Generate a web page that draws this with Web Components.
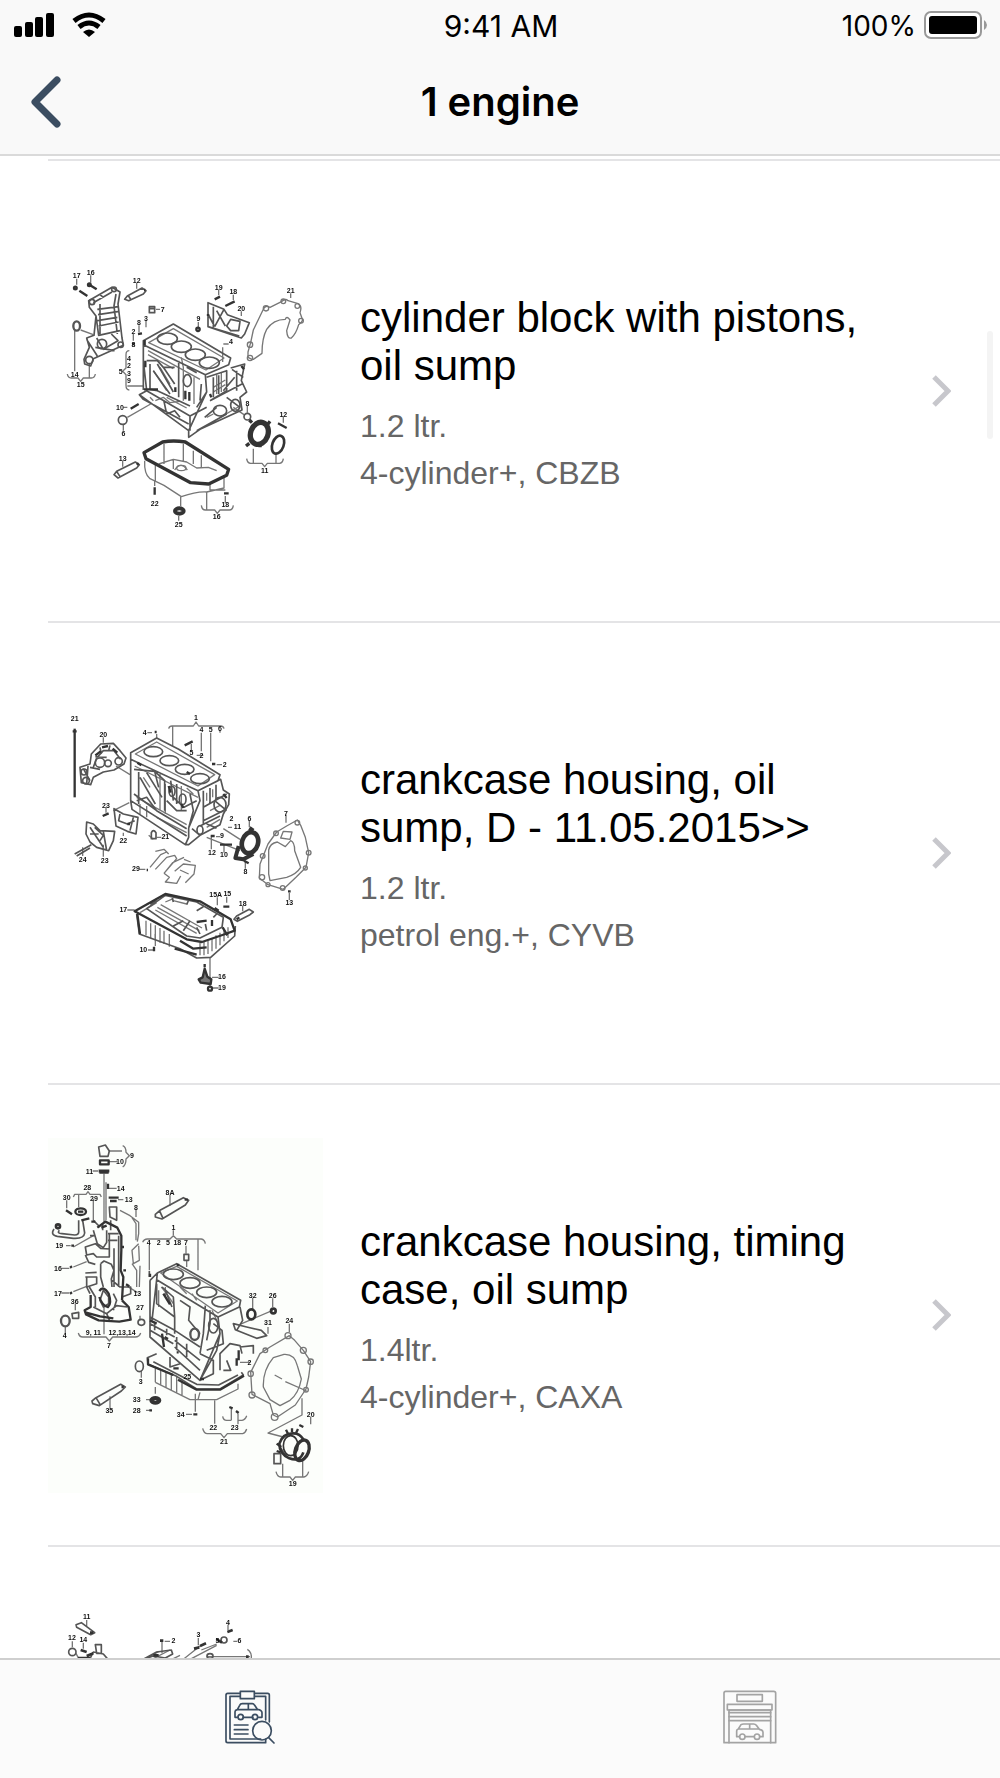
<!DOCTYPE html>
<html lang="en">
<head>
<meta charset="utf-8">
<meta name="viewport" content="width=device-width, initial-scale=1">
<title>1 engine</title>
<style>
  body{
    margin:0;
    background:#fff;
    color:#000;
    font-family:"Liberation Sans", Arial, sans-serif;
  }
</style>
</head>
<body>

<parts-app>
  <status-bar slot="top" time="9:41 AM" battery="100%"></status-bar>
  <nav-header slot="top">1 engine</nav-header>

  <part-row href="#cbzb">
    <part-diagram slot="thumb" name="block"></part-diagram>
    cylinder block with pistons, oil sump
    <span slot="size">1.2 ltr.</span>
    <span slot="model">4-cylinder+, CBZB</span>
  </part-row>
  <part-row href="#cyvb">
    <part-diagram slot="thumb" name="crankcase"></part-diagram>
    crankcase housing, oil sump, D - 11.05.2015&gt;&gt;
    <span slot="size">1.2 ltr.</span>
    <span slot="model">petrol eng.+, CYVB</span>
  </part-row>
  <part-row href="#caxa">
    <part-diagram slot="thumb" name="timing"></part-diagram>
    crankcase housing, timing case, oil sump
    <span slot="size">1.4ltr.</span>
    <span slot="model">4-cylinder+, CAXA</span>
  </part-row>
  <part-row href="#next">
    <part-diagram slot="thumb" name="next"></part-diagram>
  </part-row>

  <tab-bar slot="bottom"></tab-bar>
</parts-app>

<script>
const appTemplate = document.createElement('template');

appTemplate.innerHTML = `
 <style>
  :host{
    display:flex;
    flex-direction:column;
    height:100vh;
    overflow:hidden;
  }
  header{
    background:#f9f9f9;
    border-bottom:2px solid #dadada;
  }
  main{
    position:relative;
    flex:1;
    min-height:0;
    overflow:hidden;
    padding-top:3px;
  }
  .scroll{
    position:absolute;
    top:175px;
    right:7px;
    width:6px;
    height:108px;
    border-radius:3px;
    background:#f4f4f4;
  }
 </style>
 <header><slot name="top"></slot></header>
 <main>
   <slot></slot>
   <div class="scroll"></div>
 </main>
 <slot name="bottom"></slot>
`;

class PartsApp extends HTMLElement{
  constructor(){
    super();
    this.attachShadow({mode: 'open'})
    this.shadowRoot.appendChild(appTemplate.content.cloneNode(true))
  }
}

const statusTemplate = document.createElement('template');

statusTemplate.innerHTML = `
 <style>
  :host{
    display:grid;
    grid-template-columns:1fr auto 1fr;
    align-items:center;
    height:50px;
    padding:0 12px 0 14px;
    font-family:Inter, "Liberation Sans", sans-serif;
    font-size:28px;
    line-height:32px;
  }
  .signal, .power{
    display:flex;
    align-items:center;
  }
  .signal{
    gap:18px;
  }
  .power{
    justify-content:flex-end;
    gap:8px;
  }
  .time{
    font-size:30px;
  }
  .time, .level{
    padding-top:2px;
  }
  svg{
    display:block;
  }
 </style>
 <div class="signal">
   <svg width="40" height="26" viewBox="0 0 40 26">
     <rect x="0" y="14" width="8" height="11" rx="2"/>
     <rect x="11" y="10" width="8" height="15" rx="2"/>
     <rect x="21" y="5" width="8" height="20" rx="2"/>
     <rect x="32" y="1" width="8" height="24" rx="2"/>
   </svg>
   <svg width="34" height="26" viewBox="0 0 34 26" fill="none" stroke="#000" stroke-width="5">
     <path d="M2 9Q17 -3 32 9"/>
     <path d="M7 15Q17 7 27 15"/>
     <path d="M11 20Q17 15 23 20L17 25Z" fill="#000" stroke="none"/>
   </svg>
 </div>
 <div class="time"></div>
 <div class="power">
   <span class="level"></span>
   <svg width="64" height="28" viewBox="0 0 64 28">
     <rect x="1" y="1" width="56" height="26" rx="6" fill="#fff" stroke="#999" stroke-width="2"/>
     <rect x="5" y="5" width="48" height="18" rx="3"/>
     <path d="M60 9Q63 11 63 14T60 19Z" fill="#999"/>
   </svg>
 </div>
`;

class StatusBar extends HTMLElement{
  constructor(){
    super();
    this.attachShadow({mode: 'open'})
    this.shadowRoot.appendChild(statusTemplate.content.cloneNode(true))
    this.shadowRoot.querySelector('.time').textContent = this.getAttribute('time')
    this.shadowRoot.querySelector('.level').textContent = this.getAttribute('battery')
  }
}

const navTemplate = document.createElement('template');

navTemplate.innerHTML = `
 <style>
  :host{
    display:grid;
    grid-template-columns:1fr auto 1fr;
    align-items:center;
    height:104px;
  }
  h1{
    margin:0;
    font-family:Inter, "Liberation Sans", sans-serif;
    font-size:40px;
    line-height:48px;
    font-weight:600;
  }
  button{
    justify-self:start;
    margin:0;
    padding:12px 30px;
    border:0;
    background:none;
  }
  svg{
    display:block;
  }
 </style>
 <button type="button" aria-label="Back">
   <svg width="32" height="52" viewBox="0 0 32 52" fill="none" stroke="#3b4d61" stroke-width="7" stroke-linecap="round" stroke-linejoin="round">
     <path d="M27 4L5 26L27 48"/>
   </svg>
 </button>
 <h1><slot></slot></h1>
`;

class NavHeader extends HTMLElement{
  constructor(){
    super();
    this.attachShadow({mode: 'open'})
    this.shadowRoot.appendChild(navTemplate.content.cloneNode(true))
  }
}

const rowTemplate = document.createElement('template');

rowTemplate.innerHTML = `
 <style>
  :host{
    display:block;
    margin-left:48px;
    border-top:2px solid #e4e4e6;
  }
  a{
    display:flex;
    align-items:center;
    height:460px;
    padding-right:49px;
    color:inherit;
    text-decoration:none;
  }
  .text{
    flex:1;
    padding:8px 52px 0 37px;
  }
  h2{
    margin:0 0 13px;
    font-size:42px;
    line-height:48px;
    font-weight:400;
  }
  p{
    margin:0;
    color:#666;
    font-size:32px;
    line-height:47px;
  }
  svg{
    display:block;
    flex:none;
  }
 </style>
 <a>
   <slot name="thumb"></slot>
   <div class="text">
     <h2><slot></slot></h2>
     <p><slot name="size"></slot></p>
     <p><slot name="model"></slot></p>
   </div>
   <svg width="20" height="32" viewBox="0 0 20 32" fill="none" stroke="#c7c7cc" stroke-width="5">
     <path d="M3 2L17 16L3 30"/>
   </svg>
 </a>
`;

class PartRow extends HTMLElement{
  constructor(){
    super();
    this.attachShadow({mode: 'open'})
    this.shadowRoot.appendChild(rowTemplate.content.cloneNode(true))
    this.shadowRoot.querySelector('a').setAttribute('href', this.getAttribute('href'))
  }
}

// exploded views, drawn at three units to the pixel
// labels are [text, x, y] with y on the baseline
const diagrams = {
  block: {
    viewBox: '24 -110 825 1065',
    shapes: `
      <g class="fine">
        <path d="M110 84V102M152 74V96M290 97V114M348 176H360M104 240V362M82 370Q84 382 94 382H114L122 392L130 382H154Q164 382 166 370M148 340V382M122 238L160 252M536 117V134M580 132V148M604 182V196M752 128V142M475 214V230M297 224V244M318 210V230M280 250V270M268 300Q258 300 258 312V352L248 362L258 372V404Q258 418 268 418M262 406H310M250 470H262M262 500L332 460M250 522V540M622 466V486M580 470L612 492M550 280H566M548 290V334"/>
        <path d="M640 594V636M708 606V636M620 624Q622 638 632 638H666L674 648L682 638H718Q728 638 730 624M730 498V516M248 630V648M484 764Q486 778 496 778H524L532 788L540 778H568Q578 778 580 764M500 724V776M556 736V756M422 738V766M344 690V706M416 796V810"/>
        <path d="M636 326L624 320V304L632 276L640 238L670 176Q676 162 690 170L726 152Q736 142 744 150L772 158Q788 164 780 186L788 208Q784 218 776 222Q768 250 754 262Q742 266 740 240L750 208Q740 194 736 206Q700 206 680 236Q666 262 666 308L640 326Z"/>
        <circle cx="678" cy="173" r="8"/><circle cx="730" cy="152" r="7"/><circle cx="772" cy="166" r="7"/><circle cx="783" cy="210" r="7"/><circle cx="630" cy="282" r="8"/><circle cx="630" cy="322" r="8"/>
        <path d="M372 580V640M430 580V630M460 600V640M484 614V650M346 640V690M314 630Q312 670 330 684L372 704L424 738Q470 722 500 724L552 712V680M356 640L400 626L440 634L470 652L505 650L530 660M400 626V655M404 658Q422 630 442 658M510 700V718H556"/>
        <ellipse cx="424" cy="652" rx="14" ry="8"/>
        <path d="M326 276L400 234L552 322L498 358Z"/>
        <path d="M324 300L480 386M324 312L400 354M430 350V450M462 380V460M424 320L430 350M380 440L440 472M360 350L390 400M340 360L380 420M346 450L370 440L390 456L420 452M330 440L340 450M520 410L556 388M520 424L556 402M530 372V430M544 366V424M500 500L520 490M540 500L600 466"/>
      </g>
      <g>
        <path d="M146 150L216 110L240 124L234 160L246 262L250 284L160 324L152 346L134 340L132 326L148 290L140 262L162 254L168 196L148 170ZM160 156L216 124M168 196L176 254L240 240M172 176L236 168M174 192L238 182M172 210L232 200M176 226L236 214M190 140L180 132M170 262L190 296L234 270L214 250M140 266L172 316M166 290L224 300M228 130L222 166L232 250M180 160V250"/>
        <circle cx="186" cy="280" r="14"/><circle cx="148" cy="328" r="11"/><circle cx="222" cy="116" r="7"/><circle cx="156" cy="154" r="8"/><circle cx="242" cy="282" r="8"/>
        <ellipse cx="110" cy="226" rx="10" ry="14" stroke-width="7"/>
        <path d="M254 146L262 136L306 112L318 120L310 130L266 150ZM264 134L272 146"/>
        <path d="M222 672L230 662L286 634L298 642L290 652L234 682ZM230 662L240 678"/>
        <path d="M328 168H344V186H328ZM330 174H342"/>
        <path d="M504 156L552 176L562 192L628 216L614 250L604 262L504 228ZM520 168V230M504 190L524 228M552 176L524 228M560 226L572 206L600 212L596 240L572 240ZM530 180L556 226M504 228L598 256"/>
        <path d="M310 270L400 220L572 322L566 342L496 372L310 282ZM310 282V418M310 330L320 420L298 432L446 540V560L480 536L606 478L600 440L620 424L604 390L614 340L572 352M496 372L500 424L446 540M416 330V440M320 330H352L370 350L404 350M330 340V416L352 420L450 466M352 340L400 424M340 360L390 430M370 350L404 400M320 420L450 496L500 470M298 432L310 446L446 520M372 452L380 490L404 480L420 500M450 496V540M500 380L560 360V420L510 450M520 380V440M536 374V430M550 420L584 380M510 450L606 400M560 440L600 470M494 500L530 470M470 540L560 490M590 360V420M576 356L610 380M500 424L470 470M484 400L480 450M440 350L470 366"/>
        <ellipse cx="382" cy="264" rx="30" ry="17"/><ellipse cx="424" cy="288" rx="30" ry="17"/><ellipse cx="466" cy="312" rx="30" ry="17"/><ellipse cx="508" cy="336" rx="30" ry="17"/>
        <ellipse cx="442" cy="390" rx="12" ry="18"/><ellipse cx="540" cy="480" rx="20" ry="16"/><ellipse cx="586" cy="464" rx="14" ry="18"/>
        <circle cx="248" cy="508" r="13"/><circle cx="622" cy="498" r="10"/>
      </g>
      <g class="heavy">
        <path d="M118 120L142 136M148 102L170 116M312 118H316M524 146L540 138M556 166L584 152M294 250L306 248M280 276V284M272 474L296 460M714 518L740 532M344 710V732M552 728H566M290 642L296 638M436 420V446M448 424V450M510 430L514 440M604 346L612 356M312 416H354M316 330V350M314 268V284M504 190V196M406 410V424"/>
        <circle cx="106" cy="112" r="4"/><circle cx="148" cy="102" r="4"/><circle cx="474" cy="236" r="5"/>
        <path d="M312 606L368 574Q400 568 436 574L566 656L560 674L506 700L452 696L318 624Z" stroke-width="10"/>
        <ellipse cx="658" cy="548" rx="26" ry="34" stroke-width="16" transform="rotate(20 658 548)"/>
        <path d="M636 516L628 508M690 512L684 520M618 586L628 578M660 590V580" stroke-width="10"/>
        <ellipse cx="714" cy="582" rx="17" ry="28" stroke-width="8" transform="rotate(20 714 582)"/>
        <ellipse cx="418" cy="781" rx="13" ry="8" stroke-width="12"/>
      </g>`,
    labels: [['17',110,82],['16',152,72],['12',290,96],['7',368,183],['19',536,117],['18',580,131],['20',604,180],['21',752,127],['9',475,211],['8',297,222],['3',318,210],['2',280,250],['8',280,290],['4',267,330],['2',267,352],['3',267,375],['9',267,397],['5',242,370],['14',104,380],['15',122,410],['4',573,281],['10',240,477],['6',250,556],['8',622,466],['13',248,630],['22',344,766],['25',416,828],['18',556,770],['16',530,804],['11',674,667],['12',730,498]]
  },
  crankcase: {
    viewBox: '24 -74 825 1065',
    shapes: `
      <g class="fine">
        <path d="M386 84Q388 76 396 76H460L468 64L476 76H542Q550 76 552 84M398 78V136M484 96V152M512 96V182M540 90V96M470 164H490M322 96H336M350 100V114M454 130V150M190 110V126M228 196L270 222M220 330L268 306M198 320V336M190 432V468M128 440V466M250 396V406M326 404L340 416M350 410H364M298 506H316M262 628H284M532 590V614M560 588V606M608 616V632M510 770V856M516 830H536M518 862H536M324 748H340M346 700V736M628 360V380M738 342V366M748 576V598M616 484V504M530 192H546M514 408V446M540 408H528M552 432V456M500 410L600 450M550 384L600 416M576 380H564"/>
        <path d="M710 394L740 376L772 358L782 374L796 410L806 456L798 500L768 530L730 566L684 552L658 532L660 490L684 430ZM686 448Q690 428 712 424L736 438L752 420Q764 424 764 450L782 500Q770 520 740 530L690 540L686 520ZM722 412L730 392L756 394L750 416Z"/>
        <circle cx="708" cy="398" r="7"/><circle cx="772" cy="366" r="7"/><circle cx="806" cy="456" r="7"/><circle cx="668" cy="466" r="7"/><circle cx="666" cy="530" r="8"/><circle cx="728" cy="562" r="7"/><circle cx="684" cy="552" r="6"/><circle cx="796" cy="502" r="6"/>
        <path d="M330 500L362 462L380 454M346 506L380 470L404 464L410 474L372 518M372 518L398 486L432 470M372 518L388 530L376 544L410 548L422 526M404 512L430 490L466 494L462 520L436 546M420 508L446 520M346 452L372 446L386 460M432 476L452 484"/>
        <path d="M318 660V704M332 668V712M346 674V718M360 682V726M372 690V730M388 700V738M480 726V764M492 724V764M504 720V760M516 712V752M528 704V744M540 696V734M552 688V722M564 680V712M300 636L350 606M352 620L478 690M346 628L470 698M362 612L486 682M376 604L400 594M400 600L440 610"/>
        <path d="M286 160L350 124L524 222L474 256ZM284 196L474 290M290 290L440 372M300 310V340M320 316V350M350 350L440 396M310 230L330 260M360 220V330M376 250V340M424 256V330M440 262L460 280M500 276V300M518 266V290M510 330L540 314M500 380L540 356"/>
      </g>
      <g>
        <path d="M272 156L350 112L416 146L540 222L534 240L474 270L272 176ZM272 176V300L276 326L436 432L446 410V382L480 300L474 270M282 206L344 212L374 240V330M296 214V310M300 230L346 310M320 216L366 290M344 212L356 260M392 240L400 300M410 250V310M282 280L350 330L440 384M272 300L440 406M290 300L320 290L350 330M400 290L432 320L470 300M380 300L410 330H440M450 280L460 330L446 382M474 270L542 236L550 268L568 280L566 312L550 340L540 372L480 404L446 432L436 432M490 270V370M510 262V310M528 252V296M490 320L560 280M490 360L550 330M480 376L540 346M524 300L560 330M500 370L530 382M456 384L480 404"/>
        <ellipse cx="340" cy="153" rx="28" ry="15"/><ellipse cx="388" cy="180" rx="28" ry="15"/><ellipse cx="434" cy="206" rx="28" ry="15"/><ellipse cx="480" cy="234" rx="28" ry="15"/>
        <ellipse cx="540" cy="312" rx="18" ry="22"/><ellipse cx="428" cy="296" rx="10" ry="16"/><ellipse cx="480" cy="388" rx="9" ry="13"/><ellipse cx="396" cy="272" rx="9" ry="15"/>
        <path d="M120 200L150 190L154 160L182 130L220 128L240 150L258 172L252 190L222 208L190 214L160 230L152 252L124 246ZM160 200L170 172L190 150L222 150M166 168L200 170M130 204L150 240M144 196L140 250M180 140L184 160M210 134L206 150M222 150L242 176M150 200L180 206"/>
        <circle cx="204" cy="188" r="10"/><circle cx="236" cy="182" r="11"/><circle cx="132" cy="214" r="9"/><circle cx="138" cy="240" r="10"/><circle cx="180" cy="186" r="14"/>
        <path d="M222 324L250 340L294 350L288 400L262 392L228 376ZM240 340L236 360L262 370L284 360M280 350L270 390M140 364L160 370L180 390L224 392L220 420L206 450L170 440L150 424L138 400ZM150 380L170 410L190 440M164 380L190 404L180 420M150 400H176M190 392L200 450M104 460L154 432M110 466L150 442"/>
        <path d="M334 396Q340 384 348 396V414H334ZM582 656L590 646L628 626L640 634L630 642L592 662Z"/>
        <path d="M320 624L376 584L470 604L550 650L546 680L480 712L440 706ZM330 610L350 600M400 604L396 588M440 612L446 598M470 630L490 618M520 650L530 640M480 700L470 680M500 690L496 670M450 660L430 690M400 676L430 660"/>
        <path d="M290 640L298 700L420 744L470 772L512 770L584 706L586 676"/>
      </g>
      <g class="heavy">
        <path d="M104 84V290" stroke-width="7"/><path d="M98 92H110M434 134L458 122M344 94H350M516 190H526M188 346L206 338M166 164L182 152M186 140L204 136M218 144L232 156M262 370H270M512 406H524M540 432H576M612 480L626 488M524 622L536 630M550 618H568M590 656L598 650M342 738V752M494 790V800M744 572H752M440 214L450 220M320 508H324"/>
        <path d="M284 632L376 580L480 602L572 656L584 690L556 700L486 724L440 716ZM292 640L300 700" stroke-width="7"/>
        <path d="M500 660L470 664M516 658V676M548 680L562 704M420 720L460 744L500 740M404 744L470 762"/>
        <ellipse cx="630" cy="426" rx="24" ry="32" stroke-width="14" transform="rotate(16 630 426)"/>
        <path d="M596 436L586 472L610 476L640 460M628 382L640 390" stroke-width="12"/>
        <path d="M494 804L488 830L476 836L482 846L512 850L514 836L502 828Z" fill="#777"/><circle cx="510" cy="864" r="6"/>
        <path d="M292 186L304 194M386 256L392 276M424 310L430 322M550 280L560 292"/>
      </g>`,
    labels: [['21',104,60],['20',190,110],['1',468,57],['4',484,94],['5',512,94],['6',540,92],['4',314,102],['5',454,164],['2',554,198],['2',484,172],['23',198,322],['22',250,428],['24',128,484],['23',194,486],['21',376,414],['11',592,386],['2',574,360],['6',628,362],['7',738,346],['9',546,412],['12',516,462],['10',552,470],['8',616,520],['13',748,614],['29',288,512],['17',250,634],['15A',527,590],['15',562,586],['18',608,616],['10',310,754],['16',546,836],['19',546,868]]
  },
  timing: {
    viewBox: '24 53 825 1065',
    paper: true,
    shapes: `
      <g class="fine">
        <path d="M206 92H246M248 76Q258 80 258 96L268 106L258 116Q258 134 248 140M206 124H232M158 152H174M192 160V310M198 186V300M204 204H230M100 230L104 222H138L144 214L150 222H180L184 230M116 224V260M160 236V300M80 240V264M234 238H250M288 268V290M78 376H92M64 444H88M64 518H88M106 550V570M76 620V640M100 380L160 346M100 440L140 424M100 514L140 498M292 516L262 498M115 638Q118 650 128 650H198L208 662L218 650H286Q298 650 302 638M192 560V642M400 330V344M308 366Q312 356 322 356H390L400 346L410 356H484Q494 358 496 370M328 374V450M438 376V400M474 358V450M440 420V440M300 586V600M390 224V256M210 828V864M304 752V772M346 800V820M318 838H332M318 870H332M438 882H456M466 820V874M524 840V910M594 880V912M574 860V900M548 888Q550 900 560 900H574M594 900H606Q616 898 620 886M488 924Q492 940 502 940H542L552 952L562 940H608Q616 938 620 926M638 532V566M698 534V560M684 620V640M748 610V636M812 890V912M708 1054Q712 1070 722 1070H750L758 1080L766 1070H792Q802 1068 806 1054M728 1030V1068M788 1020V1068M786 834V884L684 938L730 950M698 570L600 612M630 726H600"/>
        <path d="M748 646L764 660L790 690L812 724L806 770L798 806L766 854L712 890L700 884L690 850L636 822L632 756L660 700L690 680ZM732 702Q764 700 772 736L784 776Q776 820 750 840L720 856L690 838L670 800Q668 750 700 712ZM704 764L726 776M736 784L800 812"/>
        <circle cx="744" cy="646" r="9"/><circle cx="790" cy="690" r="9"/><circle cx="812" cy="724" r="8"/><circle cx="632" cy="760" r="8"/><circle cx="636" cy="824" r="9"/><circle cx="704" cy="890" r="10"/><circle cx="676" cy="690" r="7"/><circle cx="798" cy="808" r="7"/>
        <path d="M240 270L270 286L296 306V340L292 364M276 292L288 310V360M296 370L276 390L280 430L298 420L296 376M276 430L290 450V500M300 436L298 500"/>
        <path d="M346 744V786M362 750V794M378 756V802M394 764V810M410 770V816M346 786L450 838H530L594 806V790M426 780V824M480 816L474 838"/>
        <path d="M362 458L410 438L592 542L534 578ZM364 500L380 520L400 550M376 500V530M356 510V560M420 500L440 520M456 520L470 540M516 570L530 600"/>
      </g>
      <g>
        <path d="M346 282L360 270L430 232L446 240L436 254L366 296L346 290ZM358 270L368 292"/>
        <path d="M156 842L168 832L242 792L256 800L244 812L178 856L158 850ZM168 832L180 852"/>
        <path d="M42 326Q30 344 52 348L100 354Q132 356 134 338L128 300M58 330Q50 340 66 340L104 344Q118 344 116 330V300M160 300L180 320M150 346H166M160 330L172 370L190 382L200 366V330M212 300V330M188 310V330M204 340H236M204 360H232M208 340V410M136 380L166 370L182 384L208 386V410L170 410L160 400L140 404ZM136 404L146 426L166 432M182 430L192 422L214 432L222 450L214 476L216 500M182 430V470L190 500M222 384V500M236 346V500M136 458L170 456M136 470H170V490L140 500V470M148 500L166 530V560M140 500L150 520M216 480L240 500H272V520L246 530M190 510L206 530V550L190 560L180 540ZM220 520L230 540L220 570M160 560L200 580L230 556L262 560M200 580L210 604M210 290L208 260H230V300Z"/>
        <path d="M176 80L196 74L208 92L204 108H180Z"/>
        <path d="M352 458L410 430L602 540L598 560L534 590L350 478ZM330 480L352 458M330 480V650L480 780L540 640M350 478L336 600M350 490V550L404 590L400 530L366 500M330 590L404 630L480 680M330 610L404 650M330 630L400 670M404 660L480 720M404 680L480 750M344 610V630M380 625V645M410 650V690M440 670V710M376 510L396 560M420 540L450 560L446 600L480 640M496 556L490 640L480 700M404 590V640M534 590L540 640L530 690L480 780M510 570V610L500 660M500 690L550 670L546 630L520 610M480 700L520 720V760L480 780M600 560L608 600L590 630M390 710V740L420 730"/>
        <ellipse cx="400" cy="462" rx="30" ry="16"/><ellipse cx="450" cy="488" rx="30" ry="16"/><ellipse cx="500" cy="516" rx="30" ry="16"/><ellipse cx="546" cy="544" rx="30" ry="16"/>
        <ellipse cx="464" cy="642" rx="13" ry="17" stroke-width="7"/><ellipse cx="520" cy="616" rx="14" ry="22"/>
        <ellipse cx="304" cy="606" rx="10" ry="9"/><ellipse cx="298" cy="738" rx="12" ry="16"/>
        <ellipse cx="76" cy="602" rx="13" ry="16" stroke-width="7"/><path d="M96 580L116 576V594H98Z"/>
        <path d="M328 452V470M432 402H446V420H432Z"/>
        <path d="M580 610L620 620L664 630L680 646L650 654L616 640L586 628ZM540 750V700L570 670L600 676L606 700M560 720L572 750L550 750M600 680L640 676V700"/>
        <path d="M350 700L322 712L324 732L410 768L470 806L540 806L610 764L604 756M340 724L470 792L536 794L594 764"/>
        <path d="M702 1000H722V1030H702ZM720 980L740 1010"/>
      </g>
      <g class="heavy">
        <path d="M176 152H208M178 156H206" stroke-width="9"/>
        <path d="M180 120H206V132H180ZM204 190V206M206 232H236M210 242H230"/>
        <ellipse cx="122" cy="274" rx="16" ry="10"/><path d="M114 274H130"/>
        <path d="M78 270L96 282M94 376H102M90 442L96 438M90 520L96 516M124 300L148 294M154 304H166M184 322L200 316M258 492L268 498M434 238H444M248 796V804M370 520L390 552M366 640L372 680M330 600L350 610M374 650L384 656M590 714V736M596 690V720M400 744H416M480 776H492M568 860L578 864M588 872L596 878M460 882H472M328 870H336M778 914L790 920M330 460V470M410 434H418M410 696H416"/>
        <path d="M172 322L196 304L232 322L244 346V390L242 450L250 470L246 540M246 380H252M250 450H258" stroke-width="7"/>
        <path d="M152 524V560L134 570L138 582L176 600L238 604L272 598L266 560L246 540M136 576L180 588L220 594M178 512Q190 494 206 520Q216 550 204 560Q186 556 178 530"/>
        <ellipse cx="346" cy="840" rx="12" ry="7" stroke-width="12"/>
        <path d="M414 778L470 808L540 808L612 766M324 714V732L400 764"/>
        <ellipse cx="634" cy="582" rx="12" ry="15" stroke-width="8"/><circle cx="700" cy="572" r="7" stroke-width="8"/>
        <path d="M790 996Q780 1026 748 1014Q718 1000 718 970Q730 934 770 940Q786 946 792 962" stroke-width="8"/>
        <ellipse cx="752" cy="976" rx="22" ry="30" stroke-width="5"/><ellipse cx="786" cy="990" rx="20" ry="32" stroke-width="10" transform="rotate(20 786 990)"/>
        <path d="M738 928L744 940M756 924V936M774 926L768 938M710 970L724 980M710 992L722 996"/>
        <circle cx="54" cy="318" r="6" stroke-width="8"/>
      </g>`,
    labels: [['9',276,113],['10',240,132],['11',148,160],['14',242,212],['28',142,210],['30',80,240],['29',162,242],['13',266,246],['8',288,268],['19',58,384],['16',54,451],['17',54,526],['36',104,552],['4',74,654],['13',292,526],['9, 11',160,645],['12,13,14',246,645],['7',207,684],['8A',390,224],['1',400,330],['4',326,374],['2',356,374],['5',384,374],['18',412,374],['7',438,374],['27',300,570],['3',302,790],['35',208,878],['32',638,532],['26',698,533],['31',684,615],['24',748,608],['2',628,733],['25',442,776],['33',290,846],['28',290,878],['34',422,890],['22',520,930],['23',584,930],['21',552,970],['20',812,890],['19',758,1097]]
  },
  next: {
    viewBox: '24 30 825 1065',
    shapes: `
      <g class="fine">
        <path d="M140 90V108M97 154V172M130 158V176M374 154H390M366 156V190M475 144V166M564 104V120M580 154H592M484 180L530 162M432 206L480 168M450 208L530 166M500 200H630M510 206H620M622 178Q636 186 634 208"/>
        <path d="M108 190L116 206M320 206L356 184M340 206L390 180M400 206L420 196"/>
      </g>
      <g>
        <path d="M108 104L124 98L164 128L152 134L110 112ZM150 206L160 186L190 192L204 208M166 164H184V190H170ZM310 208L350 186L394 180L398 192L376 204L340 198Z"/>
        <circle cx="97" cy="186" r="11"/><ellipse cx="510" cy="198" rx="9" ry="7"/><circle cx="552" cy="150" r="9"/>
      </g>
      <g class="heavy">
        <path d="M150 128H160M122 180L140 186M114 204H150M140 198L160 190M360 152H370M340 196H356M462 176L478 172M480 168L498 160M562 126L578 120M530 148L546 158M618 200H626" stroke-width="8"/>
      </g>`,
    labels: [['11',140,86],['12',96,150],['14',130,156],['2',400,159],['3',475,142],['4',564,105],['5',532,160],['6',598,160]]
  }
};

class PartDiagram extends HTMLElement{
  constructor(){
    super();
    this.attachShadow({mode: 'open'})
    const diagram = diagrams[this.getAttribute('name')]
    const labels = diagram.labels.map(([text, x, y]) => `<text x="${x}" y="${y}">${text}</text>`).join('')

    this.shadowRoot.innerHTML = `
      <style>
       :host{
         display:block;
         flex:none;
         width:275px;
         background:${diagram.paper ? '#fcfefb' : 'none'};
       }
       svg{
         display:block;
         width:100%;
         filter:blur(0.7px);
       }
       g{
         fill:none;
         stroke:#555;
         stroke-width:5;
         stroke-linejoin:round;
       }
       .fine{
         stroke:#777;
         stroke-width:4;
       }
       .heavy{
         stroke:#333;
         stroke-width:7;
       }
       text{
         fill:#111;
         font-size:21px;
         font-weight:700;
         text-anchor:middle;
       }
      </style>
      <svg viewBox="${diagram.viewBox}" aria-hidden="true">${diagram.shapes}${labels}</svg>
    `;
  }
}

const tabTemplate = document.createElement('template');

tabTemplate.innerHTML = `
 <style>
  :host{
    display:block;
    flex:none;
    border-top:2px solid #cfcfcf;
    background:#fbfbfb;
  }
  nav{
    display:flex;
    height:118px;
  }
  button{
    flex:1;
    display:flex;
    align-items:center;
    justify-content:center;
    margin:0;
    padding:0 0 4px;
    border:0;
    background:none;
    color:#a3a3a3;
  }
  .active{
    color:#3b4d61;
  }
  svg{
    display:block;
    fill:none;
    stroke:currentColor;
    stroke-width:5;
    stroke-linecap:round;
    stroke-linejoin:round;
  }
 </style>
 <nav>
   <button type="button" class="active" aria-label="Catalogue">
     <svg width="50" height="54" viewBox="0 0 150 162">
       <path d="M45 10H8Q3 10 3 15V153Q3 158 8 158H122V147M89 10H128Q133 10 133 15V96M45 19H15V147H107M89 19H122V90"/>
       <path d="M46 4H88V26H46Z"/>
       <path d="M37 82H30V65Q30 61 37 59L44 46Q46 41 52 41H82Q86 41 89 46L97 58Q111 60 111 68V82H101M84 82H54M37 59H97M70 42V58"/>
       <circle cx="47" cy="81" r="8"/><circle cx="90" cy="81" r="8"/>
       <path d="M28 105H69M28 119H69M28 132H69"/>
       <circle cx="111" cy="122" r="28"/>
       <path d="M131 143L147 159"/>
     </svg>
   </button>
   <button type="button" aria-label="Garage">
     <svg width="54" height="54" viewBox="0 0 162 162">
       <path d="M3 158V9Q3 4 8 4H152Q158 4 158 9V158H143V60H18V158Z"/>
       <path d="M42 14H118V34H42ZM13 43H147V60H13ZM18 68H143M18 80H143M18 92H143M18 158H143"/>
       <path d="M49 140H41V122Q41 119 46 117L54 104Q57 102 62 102H92Q97 102 100 106L109 118Q120 120 120 127V140H111M93 140H67M46 117H109M80 103V117"/>
       <circle cx="58" cy="140" r="8"/><circle cx="102" cy="140" r="8"/>
     </svg>
   </button>
 </nav>
`;

class TabBar extends HTMLElement{
  constructor(){
    super();
    this.attachShadow({mode: 'open'})
    this.shadowRoot.appendChild(tabTemplate.content.cloneNode(true))
  }
}

window.customElements.define('parts-app', PartsApp)
window.customElements.define('status-bar', StatusBar)
window.customElements.define('nav-header', NavHeader)
window.customElements.define('part-diagram', PartDiagram)
window.customElements.define('part-row', PartRow)
window.customElements.define('tab-bar', TabBar)
</script>
</body>
</html>
